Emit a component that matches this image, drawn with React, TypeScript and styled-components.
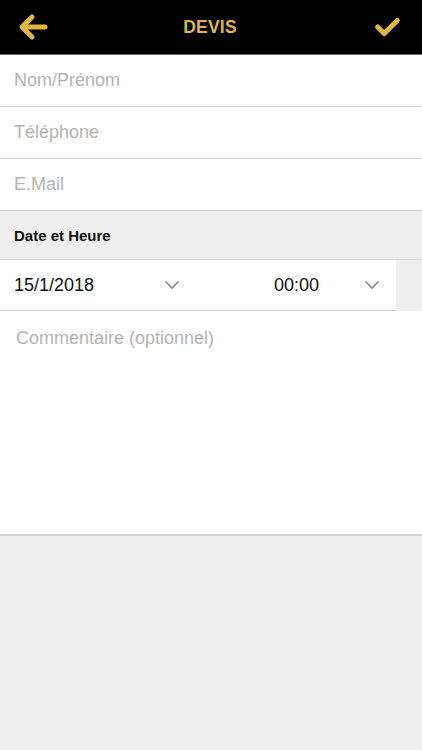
import React, { FC } from "react";
import styled, { createGlobalStyle } from "styled-components";

const GlobalStyle = createGlobalStyle`
  html, body {
    margin: 0;
    padding: 0;
    background: #eeeeee;
    font-family: "Liberation Sans", Arial, sans-serif;
  }
`;

const Screen = styled.div`
  width: 422px;
  min-height: 750px;
  background: #eeeeee;
  display: flex;
  flex-direction: column;
`;

const Header = styled.header`
  height: 55px;
  background: #000;
  display: flex;
  align-items: center;
  justify-content: space-between;
  padding: 0 18px 0 16px;
  box-sizing: border-box;
  border-bottom: 1px solid #6a6a6a;
`;

const Title = styled.h1`
  margin: 0;
  font-size: 17.5px;
  font-weight: 700;
  color: #e2b63c;
  letter-spacing: 0.2px;
`;

const IconButton = styled.button`
  background: none;
  border: none;
  padding: 0;
  width: 34px;
  height: 34px;
  display: flex;
  align-items: center;
  justify-content: center;
`;

const Field = styled.div`
  height: 51px;
  background: #fff;
  border-bottom: 1px solid #cfcfcf;
  display: flex;
  align-items: center;
  padding: 0 14px;
  font-size: 18px;
  color: #b4b4b4;
`;

const SectionLabel = styled.div`
  height: 48px;
  background: #efefef;
  border-bottom: 1px solid #d4d4d4;
  display: flex;
  align-items: center;
  padding: 0 14px;
  font-size: 15px;
  font-weight: 700;
  color: #111;
`;

const DateRow = styled.div`
  width: 396px;
  height: 50px;
  background: #fff;
  border-bottom: 1px solid #cfcfcf;
  display: grid;
  grid-template-columns: 196px 200px;
`;

const Picker = styled.div<{ $pad: number }>`
  display: flex;
  align-items: center;
  justify-content: space-between;
  padding-left: ${(p) => p.$pad}px;
  padding-right: 16px;
  font-size: 18px;
  color: #111;
`;

const Comment = styled.div`
  height: 225px;
  background: #fff;
  border-bottom: 2px solid #d0d0d0;
  padding: 17px 16px;
  box-sizing: border-box;
  font-size: 18px;
  color: #b4b4b4;
`;

const Chevron: FC = () => (
  <svg width="16" height="10" viewBox="0 0 16 10">
    <path d="M1.5 1.5 L8 8 L14.5 1.5" fill="none" stroke="#8a8a8a" strokeWidth="1.6" />
  </svg>
);

const App: FC = () => {
  return (
    <Screen>
      <GlobalStyle />
      <Header>
        <IconButton>
          <svg width="30" height="30" viewBox="0 0 30 30">
            <path
              d="M27 15 H5 M14 5 L4 15 L14 25"
              fill="none"
              stroke="#e2b63c"
              strokeWidth="5"
              strokeLinecap="round"
              strokeLinejoin="round"
            />
          </svg>
        </IconButton>
        <Title>DEVIS</Title>
        <IconButton>
          <svg width="28" height="28" viewBox="0 0 30 30">
            <path
              d="M5 15 L12 22 L26 8"
              fill="none"
              stroke="#e2b63c"
              strokeWidth="5.5"
              strokeLinecap="round"
              strokeLinejoin="round"
            />
          </svg>
        </IconButton>
      </Header>
      <Field>Nom/Prénom</Field>
      <Field>Téléphone</Field>
      <Field>E.Mail</Field>
      <SectionLabel>Date et Heure</SectionLabel>
      <DateRow>
        <Picker $pad={14}>
          <span>15/1/2018</span>
          <Chevron />
        </Picker>
        <Picker $pad={78}>
          <span>00:00</span>
          <Chevron />
        </Picker>
      </DateRow>
      <Comment>Commentaire (optionnel)</Comment>
    </Screen>
  );
};

export default App;
